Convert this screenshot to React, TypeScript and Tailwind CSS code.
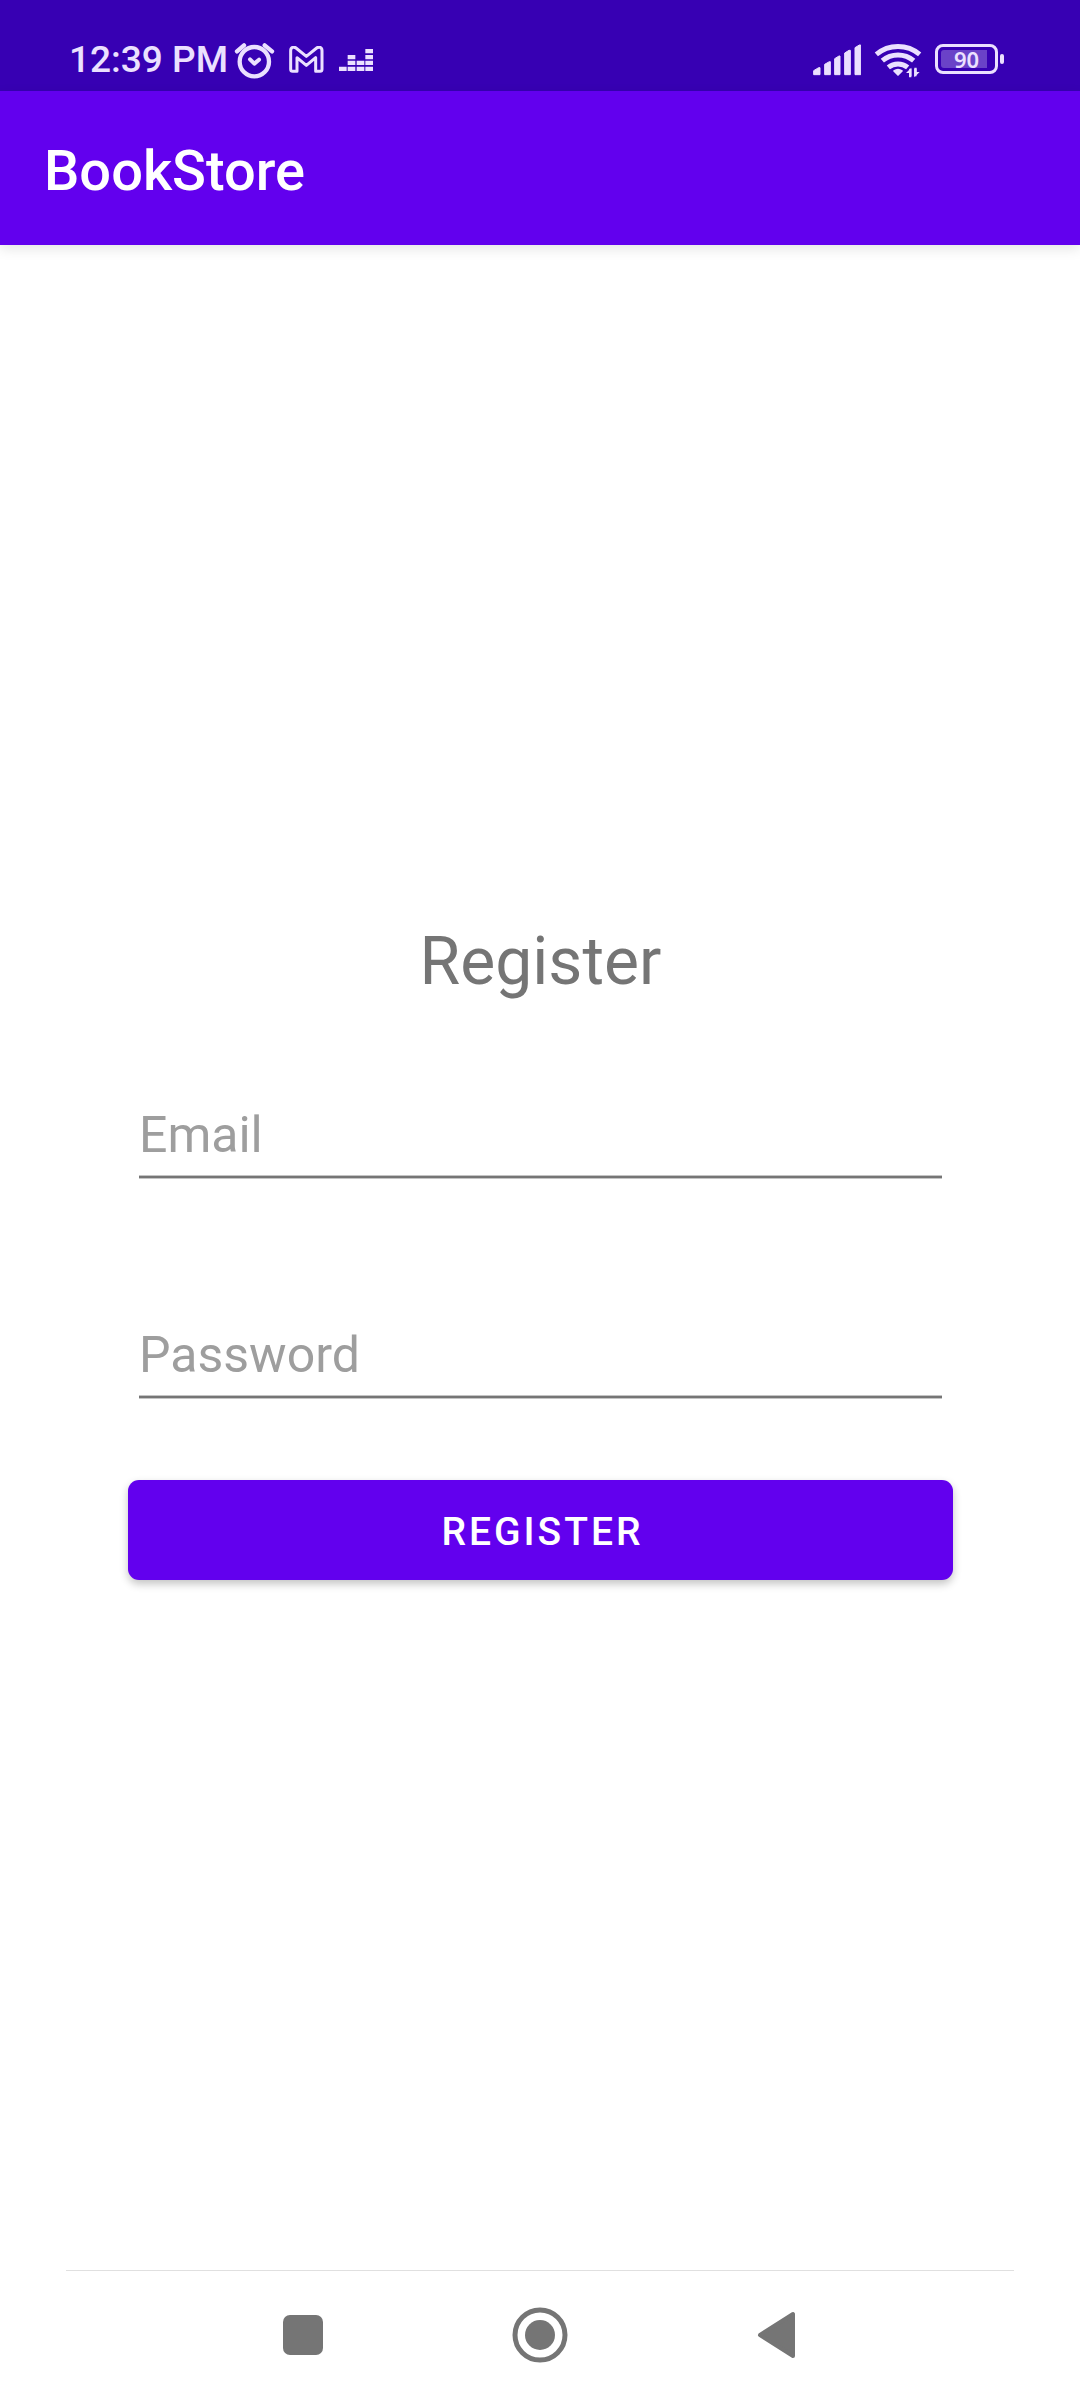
import React, { useState } from "react";

function AlarmIcon() {
  return (
    <svg className="h-[38px] w-[41px]" viewBox="552 57 123 114" fill="none" stroke="currentColor" strokeWidth="13" strokeLinecap="round" strokeLinejoin="round" aria-hidden="true">
      <circle cx="613" cy="119" r="44" />
      <path d="M561 88 582 70M644 70l22 18" />
      <path d="m600 112 13 13 14-12" strokeWidth="12" />
    </svg>
  );
}

function MailIcon() {
  return (
    <svg className="h-[28px] w-[36px]" viewBox="716 74 108 84" fill="none" stroke="currentColor" strokeWidth="9" strokeLinejoin="round" aria-hidden="true">
      <path d="M721 88v56c0 4 2 6 6 6h13v-41l28 23 28-23v41h13c4 0 6-2 6-6V88c0-10-9-13-16-8l-31 25-31-25c-7-5-16-2-16 8Z" />
    </svg>
  );
}

function EqualizerIcon() {
  return (
    <svg className="h-[22px] w-[34px]" viewBox="867 84 102 66" fill="currentColor" aria-hidden="true">
      <path d="M867 137h23v13h-23zM893 137h23v13h-23zM893 119h23v13h-23zM893 102h23v13h-23zM920 137h23v13h-23zM920 119h23v13h-23zM946 137h23v13h-23zM946 119h23v13h-23zM946 102h23v13h-23zM946 84h23v13h-23z" />
    </svg>
  );
}

function SignalIcon() {
  return (
    <svg className="h-[32px] w-[48px]" viewBox="69 71 144 96" fill="currentColor" stroke="currentColor" strokeWidth="3" strokeLinejoin="round" aria-hidden="true">
      <path d="M71 151 86 142h4v21H71zM104 132l14-8h3v39h-17zM134 115l13-8h3v56h-16zM164 98l13-8h4v73h-17zM195 82l13-8h4v89h-17z" />
    </svg>
  );
}

function WifiIcon() {
  return (
    <svg className="h-[37px] w-[48px]" viewBox="249 63 144 111" fill="none" stroke="currentColor" strokeWidth="15" aria-hidden="true">
      <path d="M256 103a101 101 0 0 1 130 0" />
      <path d="M274 122a73 73 0 0 1 94 0" />
      <path d="M292 142a46 46 0 0 1 58 0" />
      <path d="M309 153q12-9 24 0l-12 12Z" fill="currentColor" strokeWidth="5" strokeLinejoin="round" />
      <path d="M361 143v29h-7v-13h-9zM370 172v-29h7v13h9z" fill="currentColor" stroke="none" />
      <path d="M358 146v23M373 146v23" strokeWidth="7" />
    </svg>
  );
}

function Battery({ level }: { level: number }) {
  return (
    <div className="flex items-center gap-[2px] pb-[2px]" aria-label={`Battery ${level}%`}>
      <div className="relative h-[30px] w-[63px] rounded-[8px] border-[3px] border-current p-[3px]">
        <div className="h-full rounded-l-[3px] bg-[#6a42c8]" style={{ width: `${level}%` }} />
        <span className="absolute inset-0 flex items-center justify-center font-['Noto_Sans'] text-[22px] leading-none font-semibold">{level}</span>
      </div>
      <div className="h-[10px] w-[4px] rounded-[2px] bg-current" />
    </div>
  );
}

type FieldProps = {
  label: string;
  type: string;
  value: string;
  onChange: (value: string) => void;
};

function Field({ label, type, value, onChange }: FieldProps) {
  return (
    <div className="mx-[11px]">
      <input
        type={type}
        aria-label={label}
        placeholder={label}
        value={value}
        onChange={(event) => onChange(event.target.value)}
        className="block h-[84px] w-full border-b-2 border-[#757575] bg-transparent text-[50px] text-[#212121] shadow-[0_1px_#c4c4c4,inset_0_-1px_#c4c4c4] outline-none placeholder:text-[#9e9e9e]"
      />
    </div>
  );
}

export default function App() {
  const [email, setEmail] = useState("");
  const [password, setPassword] = useState("");

  return (
    <div className="flex min-h-screen flex-col bg-white font-[Roboto,sans-serif]">
      <div className="flex h-[91px] items-center justify-between bg-[#3700b3] pt-[28px] pr-[76px] pl-[69px] text-[#ebe0ff]">
        <div className="flex items-center">
          <span className="text-[37px] leading-[44px] font-medium">12:39 PM</span>
          <div className="ml-[6px] flex items-center gap-[14px]">
            <AlarmIcon />
            <MailIcon />
            <EqualizerIcon />
          </div>
        </div>
        <div className="flex items-center gap-[13px]">
          <SignalIcon />
          <WifiIcon />
          <Battery level={90} />
        </div>
      </div>

      <header className="flex h-[154px] items-center bg-[#6200ee] px-[44px] pt-[6px] shadow-[0_4px_12px_rgba(0,0,0,0.1)]">
        <h1 className="text-[56px] leading-[64px] font-medium text-white">BookStore</h1>
      </header>

      <main className="flex-1 pt-[677px] pr-[127px] pb-[80px] pl-[128px]">
        <form onSubmit={(event) => event.preventDefault()}>
          <h2 className="text-center text-[66px] leading-[80px] text-[#757575]">Register</h2>
          <div className="mt-[92px] flex flex-col gap-[136px]">
            <Field label="Email" type="email" value={email} onChange={setEmail} />
            <Field label="Password" type="password" value={password} onChange={setPassword} />
          </div>
          <button
            type="submit"
            className="mt-[82px] h-[100px] w-full rounded-[11px] bg-[#6200ee] pt-[4px] pl-[4px] text-[39px] font-medium tracking-[3px] text-white uppercase shadow-[0_4px_8px_rgba(0,0,0,0.24)]"
          >
            Register
          </button>
        </form>
      </main>

      <nav className="mx-[66px] border-t border-[#e0e0e0] text-[#757575]" aria-label="System">
        <div className="mx-[119px] grid h-[129px] grid-cols-3 place-items-center pb-[2px]">
          <button type="button" aria-label="Recent apps" className="p-2">
            <svg className="size-[56px]" viewBox="0 0 56 56" fill="currentColor">
              <rect x="8" y="8" width="40" height="40" rx="7" />
            </svg>
          </button>
          <button type="button" aria-label="Home" className="p-2">
            <svg className="size-[56px]" viewBox="0 0 56 56" fill="none">
              <circle cx="28" cy="28" r="25" stroke="currentColor" strokeWidth="5" />
              <circle cx="28" cy="28" r="15" fill="currentColor" />
            </svg>
          </button>
          <button type="button" aria-label="Back" className="p-2">
            <svg className="size-[56px]" viewBox="0 0 56 56" fill="currentColor" stroke="currentColor" strokeWidth="4" strokeLinejoin="round">
              <path d="M11 28 44 7v42Z" />
            </svg>
          </button>
        </div>
      </nav>
    </div>
  );
}
